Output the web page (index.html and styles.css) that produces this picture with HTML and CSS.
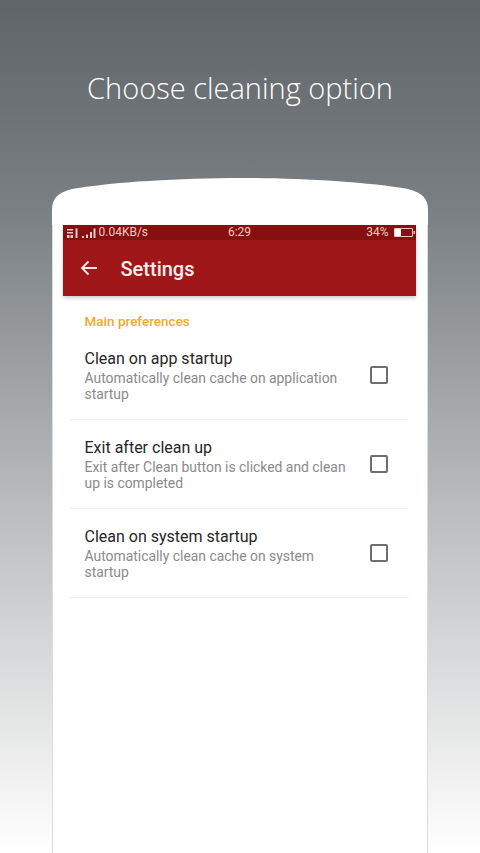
FILE: index.html
```html
<!DOCTYPE html>
<html lang="en">
<head>
<meta charset="utf-8">
<title>Choose cleaning option</title>
<link rel="stylesheet" href="styles.css">
</head>
<body>
<main class="page">
  <h1 class="headline">Choose cleaning option</h1>
  <section class="phone">
    <svg class="dome" viewBox="0 0 376 47" width="376" height="47" aria-hidden="true">
      <path d="M0 47V32C0 20 6 15 20 11C60 4 130 0 188 0C246 0 316 4 356 11C370 15 376 20 376 32V47Z" fill="#fff"/>
    </svg>
    <div class="screen-wrap">
      <div class="screen">
        <div class="appbar-block">
          <div class="statusbar">
            <div class="status-left">
              <svg class="signal" viewBox="0 0 33 10" width="33" height="10" aria-hidden="true">
                <path d="M2 1h6v1.500H2zM2 4h6v1.500H2zM2 7h2.500v3H2zM5.500 7H8v3H5.500zM10.500 .500h2V10h-2zM17 8h2v2h-2zM21 6.500h2V10h-2zM25 4h2v6h-2zM28.500 .500h2V10h-2z" fill="#f0c9c9"/>
              </svg>
              <span>0.04KB/s</span>
            </div>
            <span class="status-time">6:29</span>
            <div class="status-right">
              <span>34%</span>
              <svg viewBox="0 0 21 9" width="21" height="9" aria-hidden="true">
                <path d="M.500.500h18v8h-18z" fill="none" stroke="#e8c4c4"/>
                <path d="M1 1h6v7H1z" fill="#fff"/>
                <path d="M19.500 3H21v3h-1.500z" fill="#e8c4c4"/>
              </svg>
            </div>
          </div>
          <div class="toolbar">
            <svg class="back" viewBox="0 0 18 16" width="18" height="16" aria-hidden="true">
              <path d="M17 8H2M8.500 1.500 2 8l6.500 6.500" fill="none" stroke="#fbe9e9" stroke-width="1.800"/>
            </svg>
            <span class="toolbar-title">Settings</span>
          </div>
        </div>
        <div class="prefs">
          <h2 class="group-title">Main preferences</h2>
          <div class="pref">
            <div class="pref-text">
              <div class="pref-title">Clean on app startup</div>
              <div class="pref-desc">Automatically clean cache on application startup</div>
            </div>
            <span class="check"></span>
          </div>
          <div class="pref">
            <div class="pref-text">
              <div class="pref-title">Exit after clean up</div>
              <div class="pref-desc">Exit after Clean button is clicked and clean up is completed</div>
            </div>
            <span class="check"></span>
          </div>
          <div class="pref">
            <div class="pref-text">
              <div class="pref-title">Clean on system startup</div>
              <div class="pref-desc">Automatically clean cache on system startup</div>
            </div>
            <span class="check"></span>
          </div>
        </div>
      </div>
    </div>
  </section>
</main>
</body>
</html>
```
FILE: styles.css
```css
* { box-sizing: border-box; }
html, body { margin: 0; height: 100%; }
body {
  width: 480px;
  height: 853px;
  overflow: hidden;
  font-family: Roboto, "Liberation Sans", sans-serif;
}
.page {
  height: 853px;
  display: flex;
  flex-direction: column;
  align-items: center;
  overflow: hidden;
  background: linear-gradient(180deg, #5f6469 0%, #7b8084 25%, #a9acae 50%, #d5d6d7 75%, #ffffff 100%);
}
.headline {
  margin: 67px 0 0;
  height: 111px;
  font-family: "Open Sans", sans-serif;
  font-weight: 300;
  font-size: 29px;
  line-height: 41px;
  color: #fff;
}
.phone {
  width: 376px;
  margin-left: -1px;
  flex: 1;
  display: flex;
  flex-direction: column;
}
.dome { display: block; flex: none; }
.screen-wrap {
  flex: 1;
  background: #fff;
  border-left: 1px solid #dcdcdc;
  border-right: 1px solid #dcdcdc;
  padding-left: 10px;
}
.screen { width: 353px; }
.appbar-block {
  background: #a01719;
  box-shadow: 0 2px 4px rgba(0, 0, 0, .2);
}
.statusbar {
  height: 15px;
  background: #86100f;
  color: #eec9c9;
  font-size: 12px;
  line-height: 15px;
  display: grid;
  grid-template-columns: 1fr auto 1fr;
  align-items: center;
  padding: 0 1px 0 2px;
}
.status-left, .status-right { display: flex; align-items: center; }
.status-left { gap: 1px; }
.status-right { justify-content: flex-end; gap: 5px; }
.signal { flex: none; }
.toolbar {
  height: 56px;
  display: flex;
  align-items: center;
  gap: 23px;
  padding: 0 0 0 17px;
}
.back { flex: none; }
.toolbar-title {
  color: #fbeeee;
  font-size: 20px;
  font-weight: 500;
  margin-top: 2px;
}
.prefs { padding: 16px 7px 0; }
.group-title {
  margin: 0 0 1px 15px;
  font-size: 13.500px;
  line-height: 18px;
  font-weight: 500;
  color: #f0a92e;
}
.pref {
  height: 88.900px;
  padding: 17px 0 0 15px;
  display: flex;
  align-items: flex-start;
  justify-content: space-between;
  border-bottom: 1px solid #f1f1f1;
}
.pref-text { width: 270px; }
.pref-title {
  font-size: 16px;
  line-height: 22px;
  color: #262626;
}
.pref-desc {
  font-size: 13.900px;
  line-height: 16.400px;
  color: #8a8a8a;
}
.check {
  flex: none;
  width: 18px;
  height: 18px;
  margin: 18px 21px 0 0;
  border: 2px solid #6f6f6f;
  border-radius: 2px;
}
```
